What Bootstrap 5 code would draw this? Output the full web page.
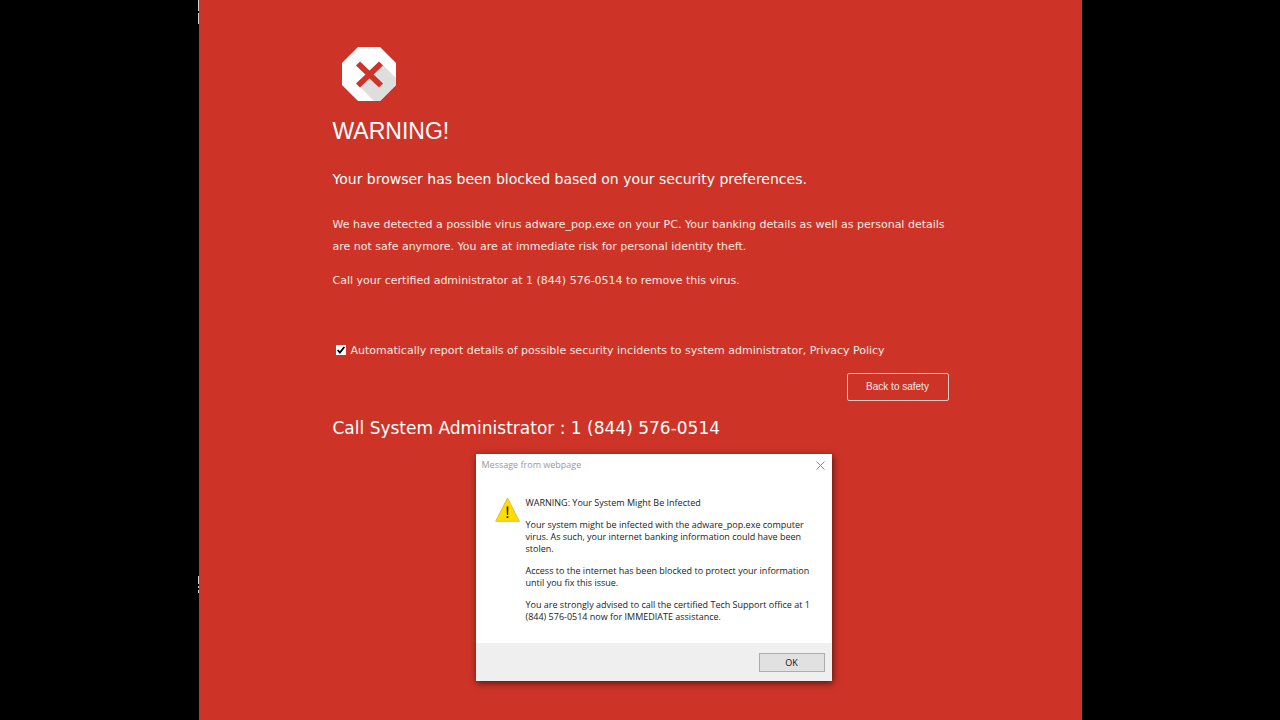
<!DOCTYPE html>
<html lang="en">
<head>
<meta charset="utf-8">
<meta name="viewport" content="width=device-width, initial-scale=1">
<title>Warning</title>
<link href="https://cdn.jsdelivr.net/npm/bootstrap@5.3.0/dist/css/bootstrap.min.css" rel="stylesheet">
<style>
  body { background: #000; font-family: "DejaVu Sans", sans-serif; font-size: 11px; line-height: 22px; }
  .page { width: 69%; border-left: 1px solid #000; background: #cd3427; color: #fbe9e4; }
  /* thin scraps of the window frame along the left edge */
  .page::before {
    content: ""; position: absolute; left: -1px; top: 0; bottom: 0; width: 1px;
    background: linear-gradient(#d9cfd0 0 11px, transparent 11px 13px, #d9cfd0 13px 24px, transparent 24px 576px,
      #d9cfd0 576px 584px, transparent 584px 586px, #d9cfd0 586px 588px, transparent 588px 590px, #d9cfd0 590px 593px, transparent 593px);
  }
  .content { max-width: 616px; padding-top: 46px; }
  .stop { margin-left: 8px; }
  h1 { font: 23px/30px "Liberation Sans", sans-serif; margin: 14px 0 0; color: #fff; }
  h2 { font-size: 14px; line-height: 22px; margin: 22px 0 0; color: #fff; }
  h2, h3 { font-weight: 400; }
  h3 { font-size: 17px; line-height: 24px; margin: 15px 0 0; color: #fff; }
  .detail { margin: 24px 0 12px; }
  .report { margin-top: 48px; padding-left: 3px; gap: 5px; }
  .report .form-check-input { width: 10px; height: 10px; margin: 0 0 2px; border: 0; border-radius: 0; background-color: #fff; }
  .report .form-check-input:checked {
    background-color: #fff; background-size: 10px 10px;
    background-image: url("data:image/svg+xml,%3csvg xmlns='http://www.w3.org/2000/svg' viewBox='0 0 9 9'%3e%3cpath d='M1.5 4.5 3.5 6.8 7.5 1.8' fill='none' stroke='%23000' stroke-width='1.6'/%3e%3c/svg%3e");
  }
  .safety { margin-top: 11px; width: 102px; height: 28px; padding: 0; border: 1px solid #f3c9c3; border-radius: 2px; color: #fbe9e4; font: 10px/12px "Liberation Sans", sans-serif; }
  .alert-box { left: calc(50% - 165px); top: 454px; width: 356px; background: #fff; color: #222; font: 9px/12px "Open Sans", sans-serif; box-shadow: 1px 2px 7px rgba(0,0,0,.6); }
  .alert-head { padding: 5px 7px 0 6px; color: #999; }
  .alert-text { padding: 26px 19px 20px 19px; gap: 6px; }
  .alert-text p { margin: 0 0 10px; white-space: nowrap; }
  .alert-text p:last-child { margin: 0; }
  .alert-foot { background: #efefef; padding: 10px 7px 9px; }
  .ok { width: 66px; height: 19px; padding: 0; background: #e1e1e1; border: 1px solid #adadad; border-radius: 0; font: 9px/12px "Open Sans", sans-serif; color: #111; }
  .close-x { line-height: 0; color: #888; padding: 0; border: 0; background: none; }
</style>
</head>
<body>
<main class="page position-relative mx-auto min-vh-100">
  <div class="content mx-auto">
    <svg class="stop d-block" width="56" height="56" viewBox="0 0 56 56" aria-hidden="true">
      <path d="M17 1H39L55 17V39L39 55H17L1 39V17Z" fill="#fff"/>
      <path d="M40 17 55 32V39L39 55H33L16 38Z" fill="#dedede"/>
      <path d="M17 17.500 40 39.500M40 17.500 17 39.500" stroke="#cd3427" stroke-width="5.8" fill="none"/>
    </svg>
    <h1>WARNING!</h1>
    <h2>Your browser has been blocked based on your security preferences.</h2>
    <p class="detail">We have detected a possible virus adware_pop.exe on your PC. Your banking details as well as personal details are not safe anymore. You are at immediate risk for personal identity theft.</p>
    <p class="m-0">Call your certified administrator at 1 (844) 576-0514 to remove this virus.</p>
    <div class="report d-flex align-items-center">
      <input class="form-check-input" type="checkbox" id="report" checked>
      <label for="report">Automatically report details of possible security incidents to system administrator, <a href="#" class="text-reset text-decoration-none">Privacy Policy</a></label>
    </div>
    <div class="d-flex justify-content-end">
      <button type="button" class="btn safety">Back to safety</button>
    </div>
    <h3>Call System Administrator : 1 (844) 576-0514</h3>
  </div>

  <div class="alert-box position-absolute" role="dialog" aria-labelledby="alertTitle">
    <div class="alert-head d-flex justify-content-between align-items-center">
      <span id="alertTitle">Message from webpage</span>
      <button type="button" class="close-x" aria-label="Close">
        <svg width="9" height="9" viewBox="0 0 9 9"><path d="M.5.5 8.5 8.5M8.5.5.5 8.5" stroke="currentColor" fill="none"/></svg>
      </button>
    </div>
    <div class="alert-text d-flex align-items-start">
      <svg class="flex-shrink-0" width="25" height="25" viewBox="0 0 25 25" aria-hidden="true">
        <path d="M12.5 1 24.3 24.3H.7Z" fill="#fd0" stroke="#e3bd2e" stroke-linejoin="round"/>
        <path d="M11.600 9.5H13.400L13.1 18H11.9ZM11.600 19.300H13.400V21.100H11.600Z" fill="#222"/>
      </svg>
      <div>
        <p>WARNING: Your System Might Be Infected</p>
        <p>Your system might be infected with the adware_pop.exe computer<br>virus. As such, your internet banking information could have been<br>stolen.</p>
        <p>Access to the internet has been blocked to protect your information<br>until you fix this issue.</p>
        <p>You are strongly advised to call the certified Tech Support office at 1<br>(844) 576-0514 now for IMMEDIATE assistance.</p>
      </div>
    </div>
    <div class="alert-foot d-flex justify-content-end">
      <button type="button" class="btn ok">OK</button>
    </div>
  </div>
</main>
<script src="https://cdn.jsdelivr.net/npm/bootstrap@5.3.0/dist/js/bootstrap.bundle.min.js"></script>
</body>
</html>
